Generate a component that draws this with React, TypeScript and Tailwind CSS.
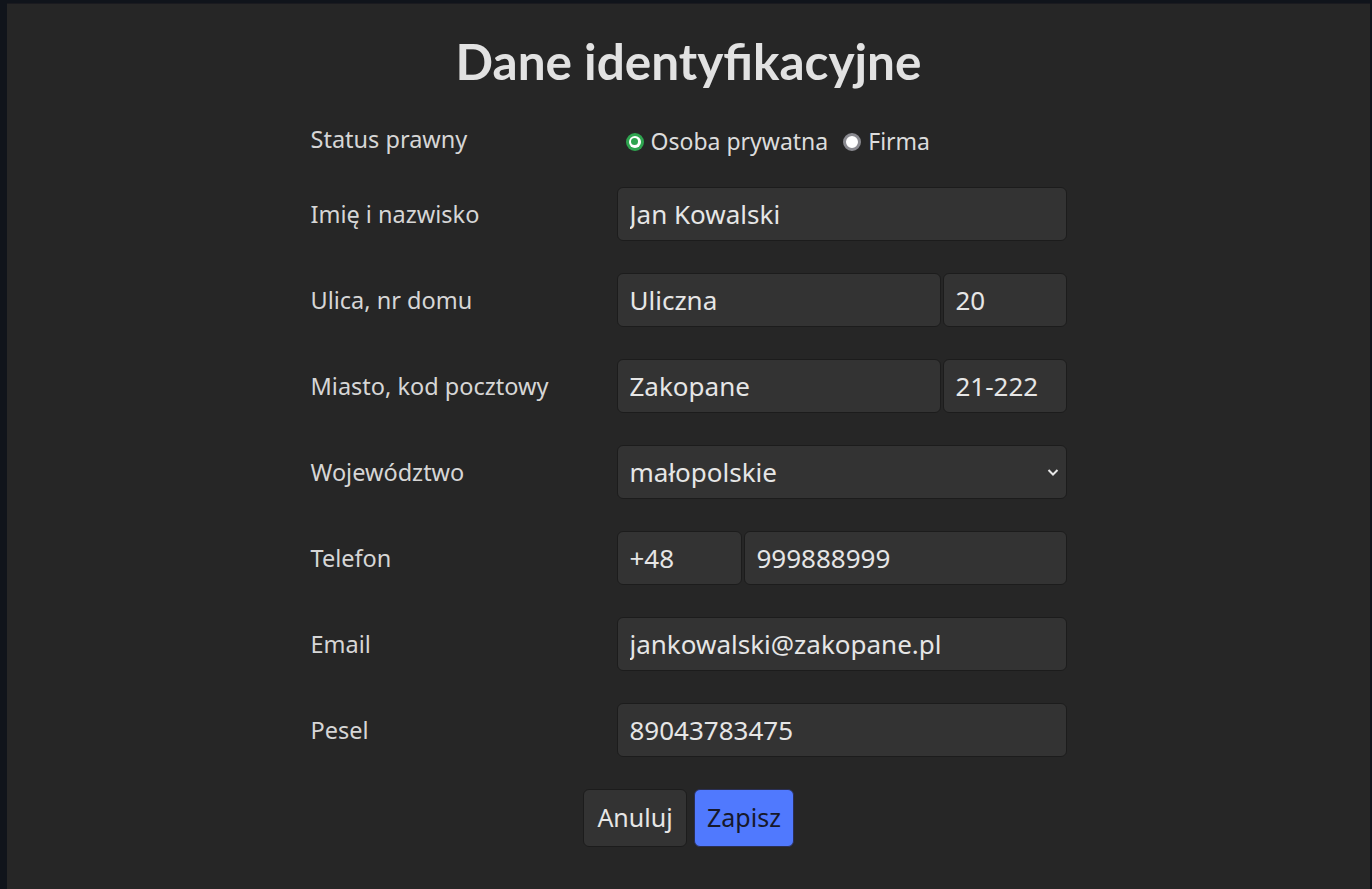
import { useState } from 'react';

const inputCls =
  'h-[54px] min-w-0 rounded-[6px] border border-[#1c1c1c] bg-[#333333] px-3 text-[26px] text-[#e6e6e6] outline-none';

function Radio({ checked, label, onClick }: { checked: boolean; label: string; onClick: () => void }) {
  return (
    <button type="button" onClick={onClick} className="flex h-[31px] items-center gap-[7px] text-[23px] leading-[31px] text-[#dcdcdc]">
      {checked ? (
        <span className="flex h-[18px] w-[18px] items-center justify-center rounded-full bg-[#2ea44f]">
          <span className="flex h-[12px] w-[12px] items-center justify-center rounded-full bg-white">
            <span className="h-[7px] w-[7px] rounded-full bg-[#2ea44f]" />
          </span>
        </span>
      ) : (
        <span className="h-[18px] w-[18px] rounded-full border-[3px] border-[#8a8a90] bg-white" />
      )}
      <span>{label}</span>
    </button>
  );
}

function Label({ children }: { children: React.ReactNode }) {
  return <div className="flex items-center text-[23.5px] leading-[31px] text-[#d6d6d6]">{children}</div>;
}

export default function App() {
  const [status, setStatus] = useState('private');
  const [form, setForm] = useState({
    name: 'Jan Kowalski',
    street: 'Uliczna',
    house: '20',
    city: 'Zakopane',
    zip: '21-222',
    region: 'małopolskie',
    prefix: '+48',
    phone: '999888999',
    email: 'jankowalski@zakopane.pl',
    pesel: '89043783475',
  });

  const set = (key: keyof typeof form) => (e: React.ChangeEvent<HTMLInputElement | HTMLSelectElement>) =>
    setForm({ ...form, [key]: e.target.value });

  return (
    <div className="min-h-screen bg-[#10141b] pl-[7px] pr-[2px] pt-[3px]" style={{ fontFamily: 'Lato, "Noto Sans", sans-serif' }}>
      <div className="min-h-[886px] border-t border-[#1a1a1f] bg-[#262626] pt-[30px]">
        <h1 className="text-center text-[49.5px] font-bold leading-[55px] text-[#e2e2e2]">Dane identyfikacyjne</h1>

        <form className="mx-auto mt-[35px] w-[756px]" onSubmit={(e) => e.preventDefault()}>
          <div className="grid grid-cols-[306px_450px] gap-y-[32px]" style={{ fontFamily: '"Noto Sans", sans-serif' }}>
            <Label>Status prawny</Label>
            <div className="flex h-[31px] items-center gap-[15px] pl-[9px] pt-[4px]">
              <Radio checked={status === 'private'} label="Osoba prywatna" onClick={() => setStatus('private')} />
              <Radio checked={status === 'company'} label="Firma" onClick={() => setStatus('company')} />
            </div>

            <Label>Imię i nazwisko</Label>
            <input className={inputCls} value={form.name} onChange={set('name')} />

            <Label>Ulica, nr domu</Label>
            <div className="flex gap-[2px]">
              <input className={`${inputCls} w-[324px]`} value={form.street} onChange={set('street')} />
              <input className={`${inputCls} flex-1`} value={form.house} onChange={set('house')} />
            </div>

            <Label>Miasto, kod pocztowy</Label>
            <div className="flex gap-[2px]">
              <input className={`${inputCls} w-[324px]`} value={form.city} onChange={set('city')} />
              <input className={`${inputCls} flex-1`} value={form.zip} onChange={set('zip')} />
            </div>

            <Label>Województwo</Label>
            <div className="relative">
              <select className={`${inputCls} w-full appearance-none`} value={form.region} onChange={set('region')}>
                <option>dolnośląskie</option>
                <option>lubelskie</option>
                <option>małopolskie</option>
                <option>mazowieckie</option>
                <option>pomorskie</option>
              </select>
              <svg className="pointer-events-none absolute right-[8px] top-[23px]" width="12" height="9" viewBox="0 0 12 9" fill="none">
                <path d="M1.5 2l4.5 4.5L10.5 2" stroke="#e6e6e6" strokeWidth="2" />
              </svg>
            </div>

            <Label>Telefon</Label>
            <div className="flex gap-[2px]">
              <input className={`${inputCls} w-[125px]`} value={form.prefix} onChange={set('prefix')} />
              <input className={`${inputCls} flex-1`} value={form.phone} onChange={set('phone')} />
            </div>

            <Label>Email</Label>
            <input className={inputCls} value={form.email} onChange={set('email')} />

            <Label>Pesel</Label>
            <input className={inputCls} value={form.pesel} onChange={set('pesel')} />
          </div>

          <div className="mt-[32px] flex justify-center gap-[7px]" style={{ fontFamily: '"Noto Sans", sans-serif' }}>
            <button type="button" className="h-[58px] w-[104px] rounded-[6px] border border-[#1c1c1c] bg-[#333333] text-[25px] text-[#e6e6e6]">
              Anuluj
            </button>
            <button type="submit" className="h-[58px] w-[100px] rounded-[6px] border border-[#2a2f55] bg-[#5079fe] text-[25px] text-[#16182a]">
              Zapisz
            </button>
          </div>
        </form>
      </div>
    </div>
  );
}
